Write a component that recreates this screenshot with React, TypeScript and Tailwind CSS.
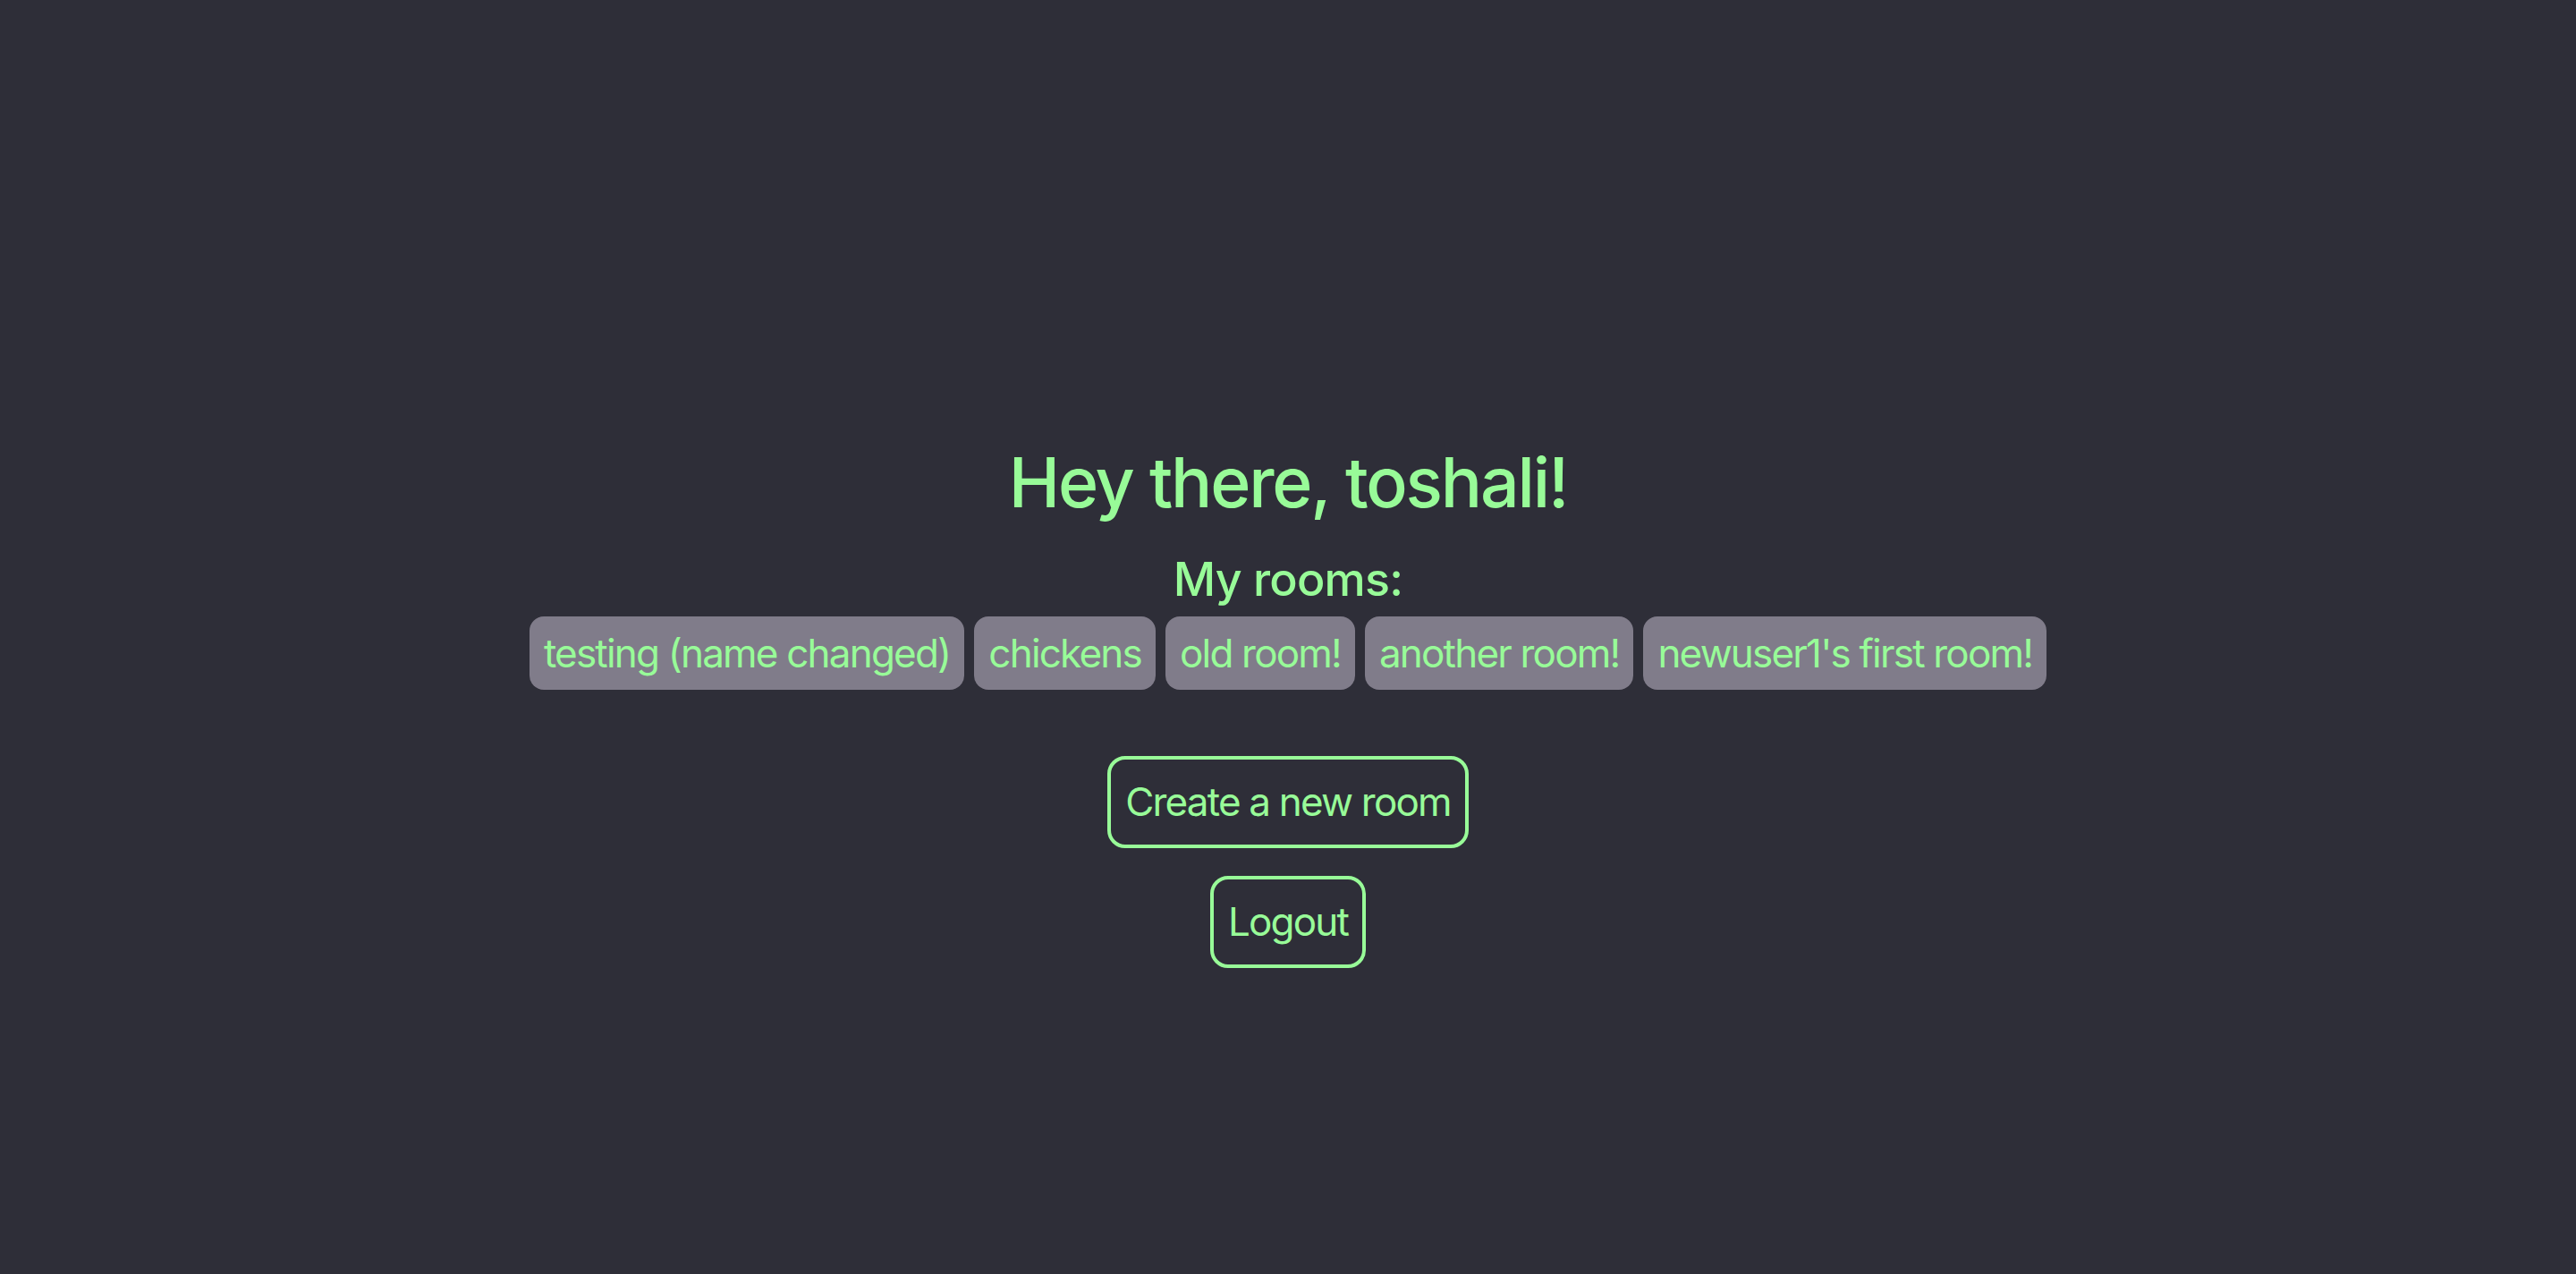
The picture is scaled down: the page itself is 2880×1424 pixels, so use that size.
import React from "react";

const rooms = [
  "testing (name changed)",
  "chickens",
  "old room!",
  "another room!",
  "newuser1's first room!",
];

export default function App() {
  return (
    <div
      className="min-h-[1424px] w-full bg-[#2e2e38] text-[#98fb98] flex flex-col items-center pt-[493px]"
      style={{ fontFamily: "Inter, 'Noto Sans', sans-serif" }}
    >
      <h1 className="text-[77px] leading-[92px] font-medium tracking-[-2.2px]">Hey there, toshali!</h1>
      <h2 className="mt-[32px] text-[52px] leading-[62px] font-medium tracking-[-0.8px]">My rooms:</h2>
      <div className="mt-[10px] flex flex-row gap-[11px]">
        {rooms.map((r) => (
          <div
            key={r}
            className="h-[82px] px-[16px] flex items-center rounded-[16px] bg-[#807c8a] text-[44px] leading-[53px] tracking-[-1.8px]"
          >
            {r}
          </div>
        ))}
      </div>
      <button className="mt-[74px] h-[103px] px-[16px] border-[4px] border-[#98fb98] rounded-[20px] text-[44px] leading-[53px] tracking-[-1.8px]">
        Create a new room
      </button>
      <button className="mt-[31px] h-[103px] px-[16px] border-[4px] border-[#98fb98] rounded-[20px] text-[44px] leading-[53px] tracking-[-1.8px]">
        Logout
      </button>
    </div>
  );
}
